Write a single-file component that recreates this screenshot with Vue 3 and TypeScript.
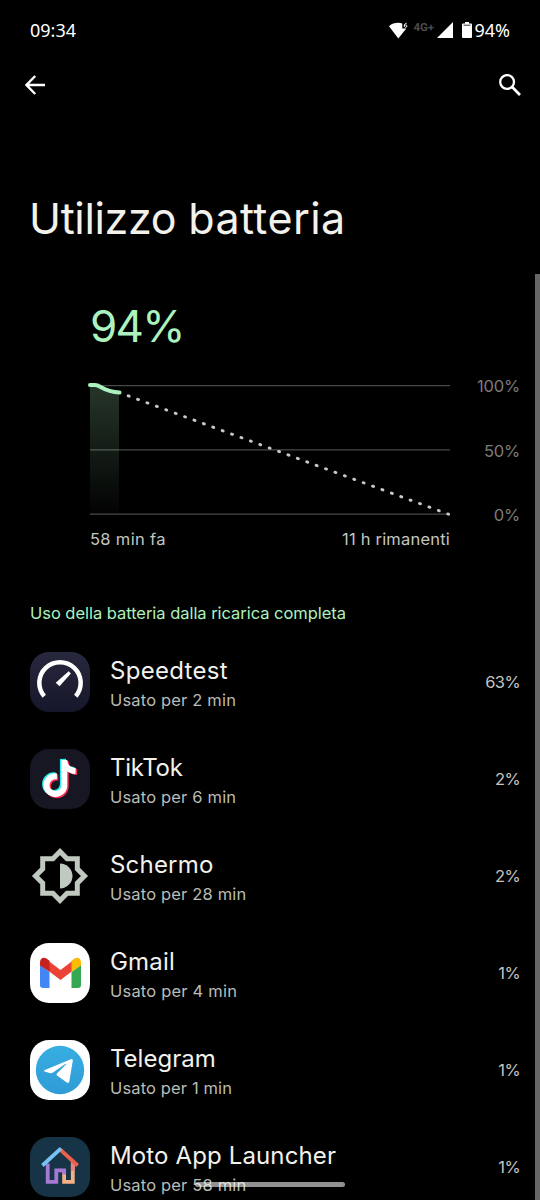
<script setup lang="ts">
interface AppUsage {
  id: string
  name: string
  usage: string
  percent: string
  nameSpacing: number
  usageSpacing: number
}

const apps: AppUsage[] = [
  { id: 'speedtest', name: 'Speedtest', usage: 'Usato per 2 min', percent: '63%', nameSpacing: 0.3, usageSpacing: 0.17 },
  { id: 'tiktok', name: 'TikTok', usage: 'Usato per 6 min', percent: '2%', nameSpacing: -0.3, usageSpacing: 0.17 },
  { id: 'display', name: 'Schermo', usage: 'Usato per 28 min', percent: '2%', nameSpacing: 0.2, usageSpacing: 0.17 },
  { id: 'gmail', name: 'Gmail', usage: 'Usato per 4 min', percent: '1%', nameSpacing: 0.2, usageSpacing: 0.2 },
  { id: 'telegram', name: 'Telegram', usage: 'Usato per 1 min', percent: '1%', nameSpacing: 0, usageSpacing: 0.13 },
  { id: 'moto', name: 'Moto App Launcher', usage: 'Usato per 58 min', percent: '1%', nameSpacing: 0.13, usageSpacing: 0.17 },
]
</script>

<template>
  <main class="screen">
    <header class="status">
      <span class="clock">09:34</span>
      <div class="indicators">
        <svg class="wifi" width="20" height="17" viewBox="0 0 20 17">
          <path d="M0 4.2C2.6 1.8 5.8.8 9.2.8c1.500 0 2.800.2 4.100.6v5h4L9.300 16.600z" fill="#fff" />
          <path d="M17.700 1.200c-1.800.2-2.400 1.300-2.400 2.600 0 1 .5 1.600 1.300 1.600s1.300-.6 1.300-1.300-.5-1.200-1.200-1.200-1.300.5-1.300 1.200" fill="none" stroke="#fff" stroke-width="1" />
        </svg>
        <span class="network">4G+</span>
        <svg class="signal" width="16" height="16" viewBox="0 0 16 16"><path d="M16 0v16H0z" fill="#fff" /></svg>
        <svg class="battery" width="10" height="16" viewBox="0 0 10 16">
          <path d="M3 0h4v1.500h2q1 0 1 1V15q0 1-1 1H1q-1 0-1-1V2.500q0-1 1-1h2z" fill="#fff" />
          <path d="M1.500 3.200h7" stroke="#000" stroke-width=".8" />
        </svg>
        <span class="level">94%</span>
      </div>
    </header>

    <nav class="toolbar">
      <svg width="20" height="20" viewBox="0 0 20 20" fill="none" stroke="#fff" stroke-width="2.4">
        <path d="M20 10H2M10.200 1 1.500 10l8.700 9" />
      </svg>
      <svg width="22" height="22" viewBox="0 0 22 22" fill="none" stroke="#fff" stroke-width="2.3">
        <circle cx="8.100" cy="8" r="6.900" /><path d="m12.900 12.800 8.100 8.200" stroke-width="2.700" />
      </svg>
    </nav>

    <h1 class="title"><span class="first">Utilizzo</span> <span class="second">batteria</span></h1>

    <section class="chart">
      <div class="current">94%</div>
      <div class="plot-row">
        <svg class="plot" width="364" height="136" viewBox="88 382 364 136">
          <defs>
            <linearGradient id="used" x1="0" y1="0" x2="0" y2="1">
              <stop offset="0" stop-color="#acf2be" stop-opacity=".22" />
              <stop offset="1" stop-color="#acf2be" stop-opacity=".01" />
            </linearGradient>
          </defs>
          <path d="M90 385.700h360M90 449.900h360M90 514.200h360" stroke="#484848" stroke-width="1.300" />
          <path d="M90 386h6c5 0 7 6 23 7v121H90z" fill="url(#used)" />
          <path d="M128.200 395.800 448.500 514.200" fill="none" stroke="#c6c9c6" stroke-width="2.900" stroke-linecap="round" stroke-dasharray="1 9.020" />
          <path d="M90 385h5c6 0 7.500 6.400 24.500 7.500" fill="none" stroke="#acf2be" stroke-width="4" stroke-linecap="round" />
        </svg>
        <div class="scale"><span>100%</span><span>50%</span><span>0%</span></div>
      </div>
      <div class="range"><span class="past">58 min fa</span><span class="remaining">11 h rimanenti</span></div>
    </section>

    <h2 class="subtitle">Uso della batteria dalla ricarica completa</h2>

    <ul class="list">
      <li v-for="app in apps" :key="app.id" class="row">
        <svg v-if="app.id === 'speedtest'" class="icon" viewBox="0 0 60 60">
          <defs><linearGradient id="night" x1="0" y1="0" x2="0" y2="1"><stop stop-color="#27273e" /><stop offset="1" stop-color="#17172b" /></linearGradient></defs>
          <rect width="60" height="60" rx="19" fill="url(#night)" />
          <path d="M14.200 44.200A20.700 20.700 0 1 1 45.800 44.200" fill="none" stroke="#fff" stroke-width="4.500" />
          <path d="m38.700 19.200 2.200 2.200L29.500 34.200 25.700 30.800z" fill="#fff" />
        </svg>
        <svg v-else-if="app.id === 'tiktok'" class="icon" viewBox="0 0 60 60">
          <rect width="60" height="60" rx="19" fill="#161722" />
          <g fill="none" stroke-width="6">
            <g transform="translate(-1.400 -1.100)" stroke="#25f4ee"><path d="M34.300 11v25.200a8.900 8.900 0 1 1-8.900-8.900h1.500M34.300 11c.2 6 4.500 10.700 11.300 11" /></g>
            <g transform="translate(1.400 1.100)" stroke="#fe2c55"><path d="M34.300 11v25.200a8.900 8.900 0 1 1-8.900-8.900h1.500M34.300 11c.2 6 4.500 10.700 11.300 11" /></g>
            <path stroke="#fff" d="M34.300 11v25.200a8.900 8.900 0 1 1-8.900-8.900h1.500M34.300 11c.2 6 4.500 10.700 11.300 11" />
          </g>
        </svg>
        <svg v-else-if="app.id === 'display'" class="icon" viewBox="0 0 60 60">
          <path d="M30 5.500 37.100 12.700H47.300V22.900L54.500 30 47.300 37.100V47.300H37.100L30 54.500 22.900 47.300H12.700V37.100L5.500 30 12.700 22.900V12.700H22.900z" fill="none" stroke="#bfc9c0" stroke-width="5" />
          <path d="M30 17.500a12.500 12.500 0 0 1 0 25z" fill="#bfc9c0" />
        </svg>
        <svg v-else-if="app.id === 'gmail'" class="icon" viewBox="0 0 60 60">
          <rect width="60" height="60" rx="19" fill="#fff" />
          <path d="M10 22l9.500 7v16H13q-3 0-3-3z" fill="#4285f4" />
          <path d="M51 22l-9.500 7v16H48q3 0 3-3z" fill="#34a853" />
          <path d="M19 18.300 30.500 27 42 18.300V28.300L30.500 37 19 28.300z" fill="#ea4335" />
          <path d="M10 19.300c0-4.600 4-5.800 7.200-3.400L19.500 17.700v11L10 22.500z" fill="#c5221f" />
          <path d="M51 19.300c0-4.600-4-5.800-7.200-3.400L41.500 17.700v11L51 22.500z" fill="#fbbc04" />
        </svg>
        <svg v-else-if="app.id === 'telegram'" class="icon" viewBox="0 0 60 60">
          <defs><linearGradient id="sky" x1="0" y1="0" x2="0" y2="1"><stop stop-color="#37aee2" /><stop offset="1" stop-color="#309bd6" /></linearGradient></defs>
          <rect width="60" height="60" rx="19" fill="#fff" />
          <circle cx="30" cy="30" r="24.200" fill="url(#sky)" />
          <path d="M14.300 30.300 40.800 19.200q2.300-.8 2 1.500L39.300 41.500q-.5 2.300-2.500 1l-9.800-7q-1-1 0-2l9.200-9.300q.4-.8-.5-.4L22.600 32.800q-1.300.8-3 .3l-5-1.500q-1.300-.6-.3-1.300z" fill="#fff" />
        </svg>
        <svg v-else class="icon" viewBox="0 0 60 60">
          <rect width="60" height="60" rx="19" fill="#173447" />
          <g fill="none" stroke-width="3.800">
            <path d="M17.700 26.500v18.400h8.600V33.400H31" stroke="#a779d4" />
            <path d="M34.100 34v10.900h8.700V26.500" stroke="#f3b184" />
            <path d="M30 33.400h4.100v4" stroke="#a779d4" />
            <path d="M42.800 25v9" stroke="#e78382" />
            <path d="M30 12.300 47.600 28.500" stroke="#ee5f4b" />
            <path d="M12.400 28.500 31 11.300" stroke="#75c2f3" />
          </g>
        </svg>
        <div class="info">
          <div class="name" :style="{ letterSpacing: app.nameSpacing + 'px' }">{{ app.name }}</div>
          <div class="usage" :style="{ letterSpacing: app.usageSpacing + 'px' }">{{ app.usage }}</div>
        </div>
        <span class="percent">{{ app.percent }}</span>
      </li>
    </ul>
    <div class="scrollbar"></div>
    <div class="home-bar"></div>
  </main>
</template>

<style>
html, body { background: #000; }
</style>

<style scoped>
.screen { position: relative; width: 540px; height: 1200px; overflow: hidden; background: #000; color: #f2f1ec; font-family: Inter, "Open Sans", sans-serif; }
.status { display: flex; justify-content: space-between; height: 60px; padding: 0 30px; font: 18px/60px "Noto Sans", sans-serif; color: #fff; }
.indicators { display: flex; align-items: center; }
.network { width: 21px; margin: -7px 3px 0 4px; font: 700 11.500px/14px Roboto, sans-serif; color: #4c4c4c; }
.battery { margin: 0 2px 0 9px; }
.toolbar { display: flex; justify-content: space-between; align-items: center; height: 50px; padding: 0 19px 0 25px; }
.title { margin: 82px 0 0 29px; font-size: 43px; line-height: 52px; font-weight: 400; white-space: nowrap; }
.first { letter-spacing: -0.35px; }
.second { letter-spacing: 0.4px; }
.chart { margin: 52px 20px 0 90px; }
.current { font-size: 44px; line-height: 60px; letter-spacing: -1.700px; color: #acf2be; }
.plot-row { display: flex; justify-content: space-between; margin: 26px 0 0 -2px; }
.plot { display: block; flex: none; }
.scale { display: flex; flex-direction: column; justify-content: space-between; height: 153px; margin-top: -8px; text-align: right; font-size: 16.500px; line-height: 24px; letter-spacing: -0.200px; color: #7c7c7a; }
.range { display: flex; justify-content: space-between; width: 360px; font-size: 16.500px; line-height: 24px; color: #c3c6c1; }
.past { letter-spacing: 0.330px; }
.remaining { letter-spacing: 0.200px; }
.subtitle { margin: 50px 0 0 30px; font-size: 16.500px; line-height: 24px; font-weight: 400; letter-spacing: -0.040px; color: #acf2be; white-space: nowrap; }
.list { margin: 27px 0 0; padding: 0; list-style: none; }
.row { display: flex; height: 97px; padding: 0 20px 0 30px; }
.icon { flex: none; width: 60px; height: 60px; }
.info { flex: 1; padding: 4px 0 0 20px; white-space: nowrap; }
.name { font-size: 24px; line-height: 30px; }
.usage { margin-top: 2px; font-size: 16.500px; line-height: 24px; color: #b9bdb7; }
.percent { font-size: 16.500px; line-height: 61px; letter-spacing: -0.600px; color: #c3c6c1; }
.scrollbar { position: absolute; top: 274px; right: 0; width: 5px; height: 926px; background: #666; }
.home-bar { position: absolute; top: 1182px; left: 195px; width: 150px; height: 5px; border-radius: 3px; background: rgba(255, 255, 255, 0.57); }
</style>
